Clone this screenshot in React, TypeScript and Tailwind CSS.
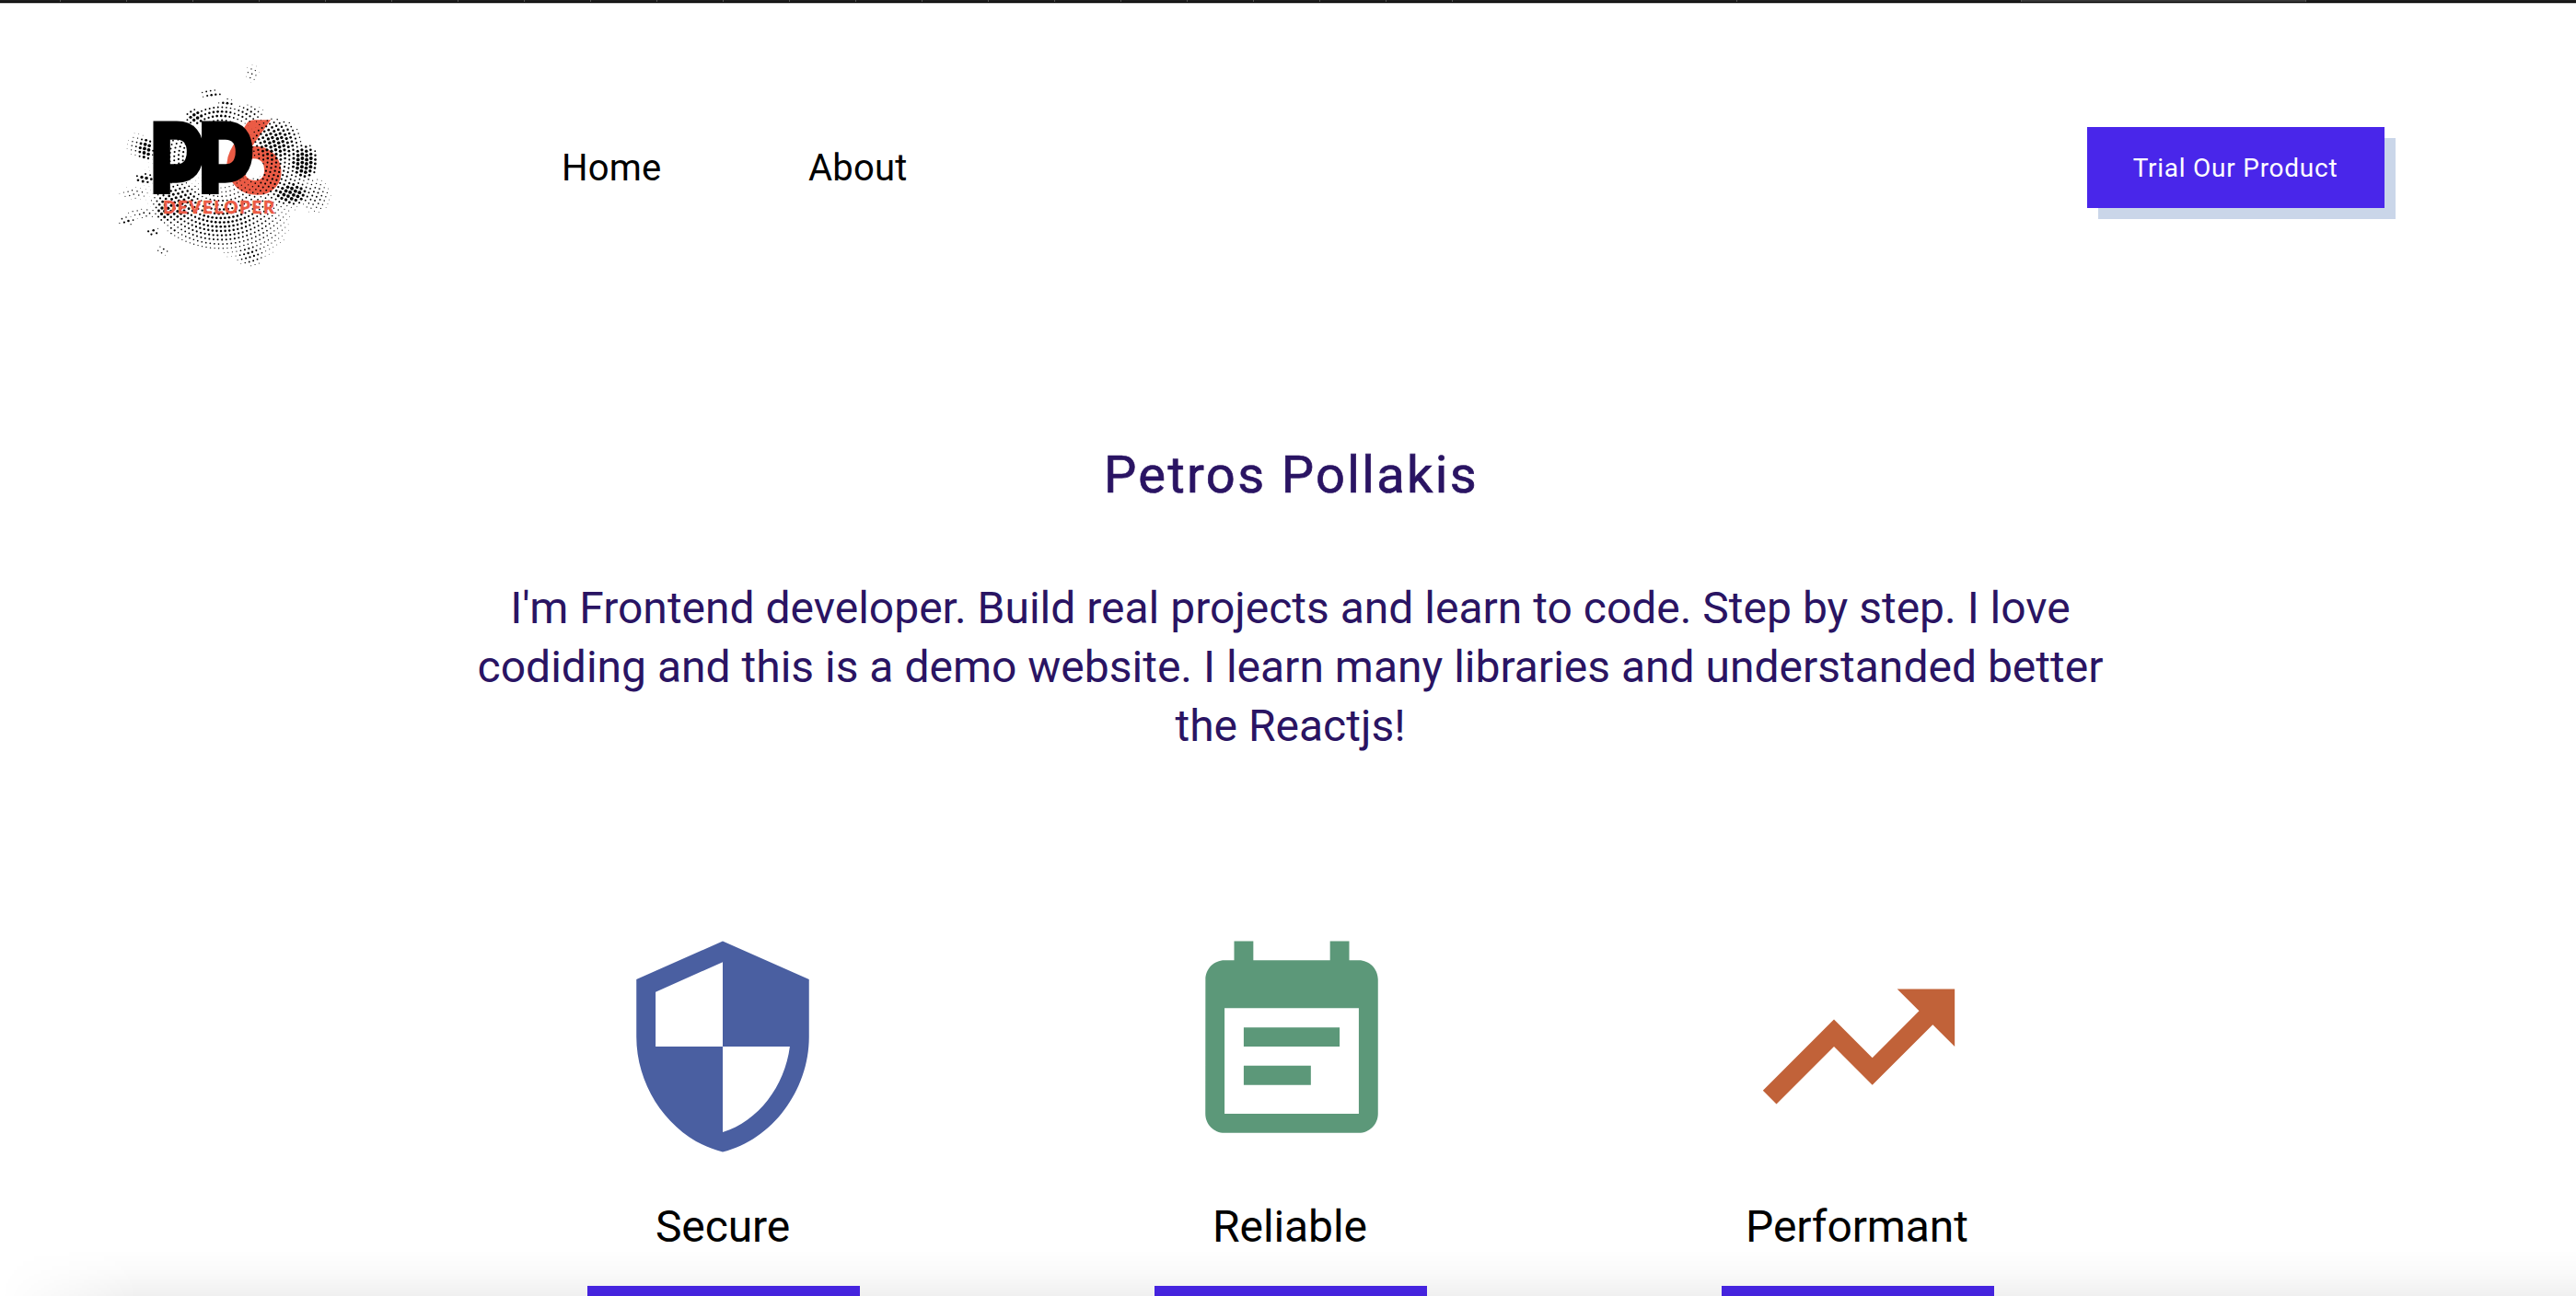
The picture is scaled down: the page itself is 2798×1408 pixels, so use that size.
import type { ComponentType } from "react";

type IconProps = { className?: string };
type Blob = { x: number; y: number; rx: number; ry: number; r: number };

// Regions of the halftone splash; each one swells the dots near its centre.
const BLOBS: Blob[] = [
  { x: 130, y: 190, rx: 62, ry: 34, r: 1.35 },
  { x: 158, y: 186, rx: 48, ry: 48, r: 1.05 },
  { x: 84, y: 172, rx: 30, ry: 26, r: 1.6 },
  { x: 70, y: 178, rx: 12, ry: 14, r: 1.9 },
  { x: 85, y: 118, rx: 22, ry: 36, r: 1.1 },
  { x: 220, y: 126, rx: 16, ry: 20, r: 2.3 },
  { x: 206, y: 160, rx: 21, ry: 13, r: 2.2 },
  { x: 190, y: 106, rx: 28, ry: 28, r: 1.8 },
  { x: 190, y: 140, rx: 40, ry: 45, r: 1.15 },
  { x: 232, y: 162, rx: 18, ry: 20, r: 1 },
  { x: 103, y: 77, rx: 12, ry: 9, r: 1.9 },
  { x: 127, y: 74, rx: 26, ry: 11, r: 1.4 },
  { x: 120, y: 52, rx: 13, ry: 5, r: 1.3 },
  { x: 136, y: 62, rx: 9, ry: 5, r: 1.4 },
  { x: 158, y: 74, rx: 20, ry: 11, r: 1.2 },
  { x: 164, y: 30, rx: 8, ry: 10, r: 0.8 },
  { x: 48, y: 112, rx: 9, ry: 13, r: 2.2 },
  { x: 40, y: 108, rx: 13, ry: 14, r: 0.9 },
  { x: 47, y: 144, rx: 12, ry: 6, r: 1.8 },
  { x: 36, y: 160, rx: 18, ry: 7, r: 0.8 },
  { x: 28, y: 190, rx: 10, ry: 5, r: 1.3 },
  { x: 46, y: 182, rx: 20, ry: 6, r: 0.9 },
  { x: 56, y: 202, rx: 9, ry: 5, r: 1.4 },
  { x: 78, y: 200, rx: 6, ry: 6, r: 1.2 },
  { x: 67, y: 222, rx: 7, ry: 6, r: 1 },
  { x: 162, y: 226, rx: 17, ry: 14, r: 1.2 },
  { x: 130, y: 148, rx: 120, ry: 95, r: 0.3 },
];

const DOTS = Array.from({ length: 24 }, (_, ring) => 32 + ring * 4.7).flatMap((radius, ring) => {
  const count = Math.round((2 * Math.PI * radius) / 4.6);
  return Array.from({ length: count }, (_, i) => {
    const angle = ((i + (ring % 2) * 0.3) / count) * 2 * Math.PI;
    const x = 130 + radius * Math.cos(angle);
    const y = 122 + radius * Math.sin(angle);
    const r = BLOBS.reduce((max, b) => {
      const d = ((x - b.x) / b.rx) ** 2 + ((y - b.y) / b.ry) ** 2;
      return d < 1 ? Math.max(max, b.r * (1 - d * 0.65)) : max;
    }, 0);
    return { x, y, r };
  }).filter((d) => d.r > 0.2);
});

function Logo() {
  return (
    <svg viewBox="0 0 270 264" className="h-[264px] w-[270px]">
      <clipPath id="letters">
        <rect x="50" y="80" width="120" height="81" />
      </clipPath>
      <text
        transform="translate(138 159) skewX(7)"
        className="fill-[#eb5b45] stroke-[#eb5b45] font-[Lato] text-[106px] font-black"
        strokeWidth="4"
      >
        6
      </text>
      <g className="fill-black">
        {DOTS.map((d, i) => (
          <circle key={i} cx={d.x.toFixed(2)} cy={d.y.toFixed(2)} r={Math.min(d.r, 1.9).toFixed(2)} />
        ))}
      </g>
      <circle cx="166" cy="133" r="10.8" className="fill-white" />
      <g
        clipPath="url(#letters)"
        className="fill-black stroke-black font-[Lato] text-[106px] font-black"
        strokeWidth="4.5"
      >
        <text transform="translate(51.3 177.5) scale(0.9 1.22)">P</text>
        <text transform="translate(103.8 177.5) scale(0.91 1.22)">P</text>
      </g>
      <text
        x="67"
        y="181.5"
        textLength="121"
        className="fill-[#eb5b45] stroke-[#eb5b45] font-[Lato] text-[18.5px] font-black"
        strokeWidth="0.5"
      >
        DEVELOPER
      </text>
    </svg>
  );
}

function ShieldIcon({ className }: IconProps) {
  return (
    <svg viewBox="0 0 24 24" fill="currentColor" className={className}>
      <path d="M12 1L3 5v6c0 5.55 3.84 10.74 9 12 5.16-1.26 9-6.45 9-12V5l-9-4zm0 10.99h7c-.53 4.12-3.28 7.79-7 8.94V12H5V6.3l7-3.11v8.8z" />
    </svg>
  );
}

function EventNoteIcon({ className }: IconProps) {
  return (
    <svg viewBox="0 0 24 24" fill="currentColor" className={className}>
      <path d="M17 10H7v2h10v-2zm2-7h-1V1h-2v2H8V1H6v2H5c-1.11 0-1.99.9-1.99 2L3 19c0 1.1.89 2 2 2h14c1.1 0 2-.9 2-2V5c0-1.1-.9-2-2-2zm0 16H5V8h14v11zm-5-5H7v2h7v-2z" />
    </svg>
  );
}

function TrendingUpIcon({ className }: IconProps) {
  return (
    <svg viewBox="0 0 24 24" fill="currentColor" className={className}>
      <path d="M16 6l2.29 2.29-4.88 4.88-4-4L2 16.59 3.41 18l6-6 4 4 6.3-6.29L22 12V6z" />
    </svg>
  );
}

const FEATURES: { label: string; Icon: ComponentType<IconProps>; look: string }[] = [
  { label: "Secure", Icon: ShieldIcon, look: "mr-[2px] text-[#4a5fa1]" },
  { label: "Reliable", Icon: EventNoteIcon, look: "ml-[2px] text-[#5c9879]" },
  { label: "Performant", Icon: TrendingUpIcon, look: "ml-[2px] text-[#c16239]" },
];

function TabStrip() {
  return (
    <div className="flex h-1 w-full shrink-0 flex-col">
      <div className="flex h-0.5 bg-[#1e1e1e]">
        <div className="w-[66px] shrink-0 border-r border-[#555]" />
        {Array.from({ length: 21 }, (_, i) => (
          <div key={i} className="w-[72px] shrink-0 border-r border-[#555]" />
        ))}
        <div className="w-[309px] shrink-0 border-r border-[#555]" />
        <div className="w-[309px] shrink-0 border-r border-[#555]" />
        <div className="w-[309px] shrink-0 border-r border-[#555] bg-[#393939]" />
      </div>
      <div className="h-px bg-black" />
      <div className="h-px bg-[#b9b9b9]" />
    </div>
  );
}

export default function App() {
  return (
    <div className="relative flex h-[1408px] w-full flex-col overflow-hidden bg-white font-[Roboto,sans-serif] text-black">
      <TabStrip />

      <header className="flex h-[356px] shrink-0 items-center pr-[208px] pl-[110px]">
        <Logo />
        <nav className="ml-[230px] flex gap-[160px] pt-[2px] text-[40px] leading-[48px]">
          <a className="w-[108px] tracking-[0.2px] whitespace-nowrap">Home</a>
          <a className="tracking-[0.2px] whitespace-nowrap">About</a>
        </nav>
        <button className="ml-auto h-[88px] w-[323px] bg-[#4926ea] pt-[2px] pr-[1px] text-[28px] tracking-[0.75px] text-white shadow-[12px_12px_0_#cad6e9]">
          Trial Our Product
        </button>
      </header>

      <section className="mt-[124px] flex flex-col items-center pl-[5px] text-center text-[#2a1463]">
        <h1 className="pl-[2px] text-[56px] leading-[64px] font-normal tracking-[2.35px] [-webkit-text-stroke:0.7px_#2a1463]">
          Petros Pollakis
        </h1>
        <p className="mt-[81px] w-[1800px] text-[48px] leading-[64px]">
          I'm Frontend developer. Build real projects and learn to code. Step by step. I love
          codiding and this is a demo website. I learn many libraries and understanded better the
          Reactjs!
        </p>
      </section>

      <section className="mt-[191px] ml-[478px] grid w-[1848px] shrink-0 grid-cols-3">
        {FEATURES.map(({ label, Icon, look }) => (
          <article key={label} className="flex flex-col items-center">
            <Icon className={`size-[250px] ${look}`} />
            <h2 className="mt-[43px] pr-[2px] text-[48px] leading-[56px] tracking-[-0.1px]">
              {label}
            </h2>
            <div className="mt-9 h-[88px] w-[296px] bg-[#4926ea]" />
          </article>
        ))}
      </section>

      <div className="pointer-events-none absolute inset-x-0 bottom-0 h-[50px] bg-linear-to-b from-black/0 via-black/2 to-black/6 mask-[linear-gradient(to_right,transparent,black_150px)]" />
    </div>
  );
}
